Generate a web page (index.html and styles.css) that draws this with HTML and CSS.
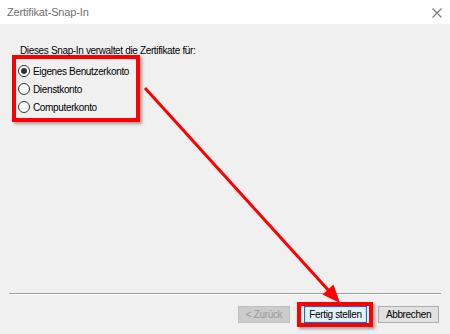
FILE: index.html
```html
<!DOCTYPE html>
<html lang="de">

<head>
    <meta charset="UTF-8">
    <meta name="viewport" content="width=device-width, initial-scale=1.0">
    <title>Zertifikat-Snap-In</title>
    <link rel="stylesheet" href="styles.css">
</head>

<body>

    <div id="dialog">
        <div class="titlebar">
            <span class="title">Zertifikat-Snap-In</span>
            <svg class="close" width="10" height="10" viewBox="0 0 10 10">
                <path d="M0.5 0.5 L9.5 9.5 M9.5 0.5 L0.5 9.5" stroke="#7a7a7a" stroke-width="1.1" fill="none" />
            </svg>
        </div>

        <div class="content">
            <p class="intro">Dieses Snap-In verwaltet die Zertifikate für:</p>
            <div class="markBox">
                <label class="option"><span class="radio checked"></span>Eigenes Benutzerkonto</label>
                <label class="option"><span class="radio"></span>Dienstkonto</label>
                <label class="option"><span class="radio"></span>Computerkonto</label>
            </div>
        </div>

        <div class="footer">
            <div class="separator"></div>
            <div class="buttons">
                <button class="btn disabled">&lt; Zurück</button>
                <span class="markBtn"><button class="btn primary">Fertig stellen</button></span>
                <button class="btn">Abbrechen</button>
            </div>
        </div>

        <!-- roter Pfeil von der Auswahl zum Fertig-Button -->
        <svg class="arrow" width="450" height="334" viewBox="0 0 450 334">
            <line x1="145" y1="88" x2="330" y2="292" stroke="#ff0000" stroke-width="3" />
            <polygon points="340,303 322.5,294.5 333.5,284.5" fill="#ff0000" />
        </svg>
    </div>

</body>

</html>
```

FILE: styles.css
```css
* {
    margin: 0;
    padding: 0;
    box-sizing: border-box;
}

html,
body {
    width: 100%;
    height: 100%;
}

body {
    font-family: "Liberation Sans", Arial, sans-serif;
    font-size: 10px;
    letter-spacing: -0.35px;
    color: #000;
}

#dialog {
    position: relative;
    width: 450px;
    height: 334px;
    background-color: #f0f0f0;
    display: flex;
    flex-direction: column;
}

.titlebar {
    height: 24px;
    background-color: #fff;
    display: flex;
    justify-content: space-between;
    align-items: center;
    padding: 0 8px 0 7px;
}

.title {
    font-size: 11px;
    letter-spacing: -0.15px;
    color: #707070;
}

.close {
    display: block;
    margin-top: 2px;
}

.content {
    flex: 1;
    padding-left: 12px;
}

.intro {
    margin-top: 20px;
    padding-left: 8px;
    line-height: 13px;
}

.markBox {
    width: 128px;
    margin-top: -2px;
    padding: 3px 0 2px 2px;
    border: 4px solid #ff0000;
    box-shadow: 2px 2px 3px rgba(0, 0, 0, 0.35);
    display: flex;
    flex-direction: column;
}

.option {
    height: 18px;
    display: flex;
    align-items: center;
    gap: 3px;
}

.radio {
    width: 12px;
    height: 12px;
    border: 1px solid #333;
    border-radius: 50%;
    background-color: #fff;
    display: flex;
    justify-content: center;
    align-items: center;
}

.radio.checked::after {
    content: "";
    width: 6px;
    height: 6px;
    border-radius: 50%;
    background-color: #333;
}

.footer {
    height: 41px;
}

.separator {
    margin: 0 9px;
    height: 2px;
    border-top: 1px solid #a0a0a0;
    border-bottom: 1px solid #fff;
}

.buttons {
    margin-top: 7px;
    padding-right: 11px;
    display: flex;
    justify-content: flex-end;
    align-items: center;
}

.btn {
    height: 17px;
    width: 61px;
    font-family: inherit;
    font-size: 10px;
    letter-spacing: -0.35px;
    color: #000;
    background-color: #e1e1e1;
    border: 1px solid #adadad;
}

.btn.disabled {
    width: 52px;
    margin-right: 7px;
    color: #9a9a9a;
    background-color: #cccccc;
    border-color: #bfbfbf;
}

.markBtn {
    display: flex;
    padding: 0 2px 0 3px;
    height: 25px;
    align-items: center;
    margin-right: 5px;
    border: 4px solid #ff0000;
    box-shadow: 2px 2px 3px rgba(0, 0, 0, 0.35);
}

.btn.primary {
    width: 63px;
    background-color: #e5f1fb;
    border: 1px solid #0078d7;
    box-shadow: inset 0 0 0 1px #cde4f7;
}

.arrow {
    position: absolute;
    left: 0;
    top: 0;
    pointer-events: none;
}
```
